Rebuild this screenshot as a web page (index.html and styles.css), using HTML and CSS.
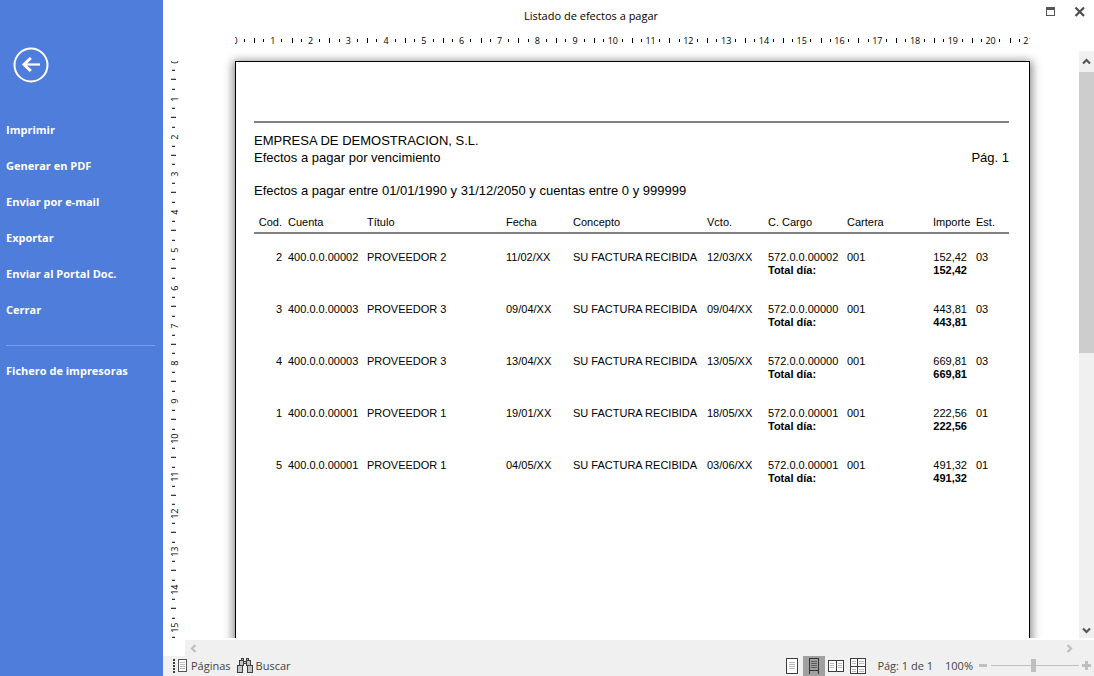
FILE: index.html
```html
<!DOCTYPE html>
<html lang="es">
<head>
<meta charset="utf-8">
<title>Listado de efectos a pagar</title>
<link rel="stylesheet" href="styles.css">
</head>
<body>
<div class="app">
  <aside class="sidebar">
    <button class="back" type="button" aria-label="Volver">
      <svg width="36" height="36" viewBox="0 0 36 36" fill="none" stroke="#fff">
        <circle cx="18" cy="18" r="16.5" stroke-width="2"/>
        <path d="M11 17.5H27" stroke-width="2.2"/>
        <path d="M17.8 11L11 17.5L17.8 24" stroke-width="3"/>
      </svg>
    </button>
    <nav class="menu">
      <button type="button">Imprimir</button>
      <button type="button">Generar en PDF</button>
      <button type="button">Enviar por e-mail</button>
      <button type="button">Exportar</button>
      <button type="button">Enviar al Portal Doc.</button>
      <button type="button">Cerrar</button>
      <hr class="menu-line">
      <button type="button">Fichero de impresoras</button>
    </nav>
  </aside>

  <main class="viewer">
    <header class="titlebar">
      <h1>Listado de efectos a pagar</h1>
      <div class="window-buttons">
        <button type="button" aria-label="Maximizar">
          <svg width="10" height="10" viewBox="0 0 10 10" shape-rendering="crispEdges"><path d="M0 0H9V9H0ZM1 3V8H8V3Z" fill="#555" fill-rule="evenodd"/></svg>
        </button>
        <button type="button" aria-label="Cerrar ventana">
          <svg width="12" height="12" viewBox="0 0 12 12"><path d="M1.5 1.5L10 10M10 1.5L1.5 10" stroke="#4e4e4e" stroke-width="2.2"/></svg>
        </button>
      </div>
    </header>

    <div class="ruler-row">
      <ol class="ruler" id="ruler-x"></ol>
    </div>

    <div class="stage">
      <div class="ruler-column">
        <ol class="ruler vertical" id="ruler-y"></ol>
      </div>
      <div class="canvas">
        <article class="paper">
          <div class="report-head">
            <h2>EMPRESA DE DEMOSTRACION, S.L.</h2>
            <div class="report-sub">
              <span>Efectos a pagar por vencimiento</span>
              <span>Pág. 1</span>
            </div>
            <p>Efectos a pagar entre 01/01/1990 y 31/12/2050 y cuentas entre 0 y 999999</p>
          </div>
          <table class="report">
            <colgroup>
              <col class="c-cod"><col class="c-cuenta"><col class="c-titulo"><col class="c-fecha"><col class="c-concepto"><col class="c-vcto"><col class="c-cargo"><col class="c-cartera"><col class="c-importe"><col class="c-est">
            </colgroup>
            <thead>
              <tr><th class="cod">Cod.</th><th>Cuenta</th><th>Título</th><th>Fecha</th><th>Concepto</th><th>Vcto.</th><th>C. Cargo</th><th>Cartera</th><th>Importe</th><th>Est.</th></tr>
            </thead>
            <tbody>
              <tr><td class="cod">2</td><td>400.0.0.00002</td><td>PROVEEDOR 2</td><td>11/02/XX</td><td>SU FACTURA RECIBIDA</td><td>12/03/XX</td><td>572.0.0.00002</td><td>001</td><td class="importe">152,42</td><td>03</td></tr>
              <tr class="total"><td colspan="6"></td><td colspan="2">Total día:</td><td class="importe">152,42</td><td></td></tr>
            </tbody>
            <tbody>
              <tr><td class="cod">3</td><td>400.0.0.00003</td><td>PROVEEDOR 3</td><td>09/04/XX</td><td>SU FACTURA RECIBIDA</td><td>09/04/XX</td><td>572.0.0.00000</td><td>001</td><td class="importe">443,81</td><td>03</td></tr>
              <tr class="total"><td colspan="6"></td><td colspan="2">Total día:</td><td class="importe">443,81</td><td></td></tr>
            </tbody>
            <tbody>
              <tr><td class="cod">4</td><td>400.0.0.00003</td><td>PROVEEDOR 3</td><td>13/04/XX</td><td>SU FACTURA RECIBIDA</td><td>13/05/XX</td><td>572.0.0.00000</td><td>001</td><td class="importe">669,81</td><td>03</td></tr>
              <tr class="total"><td colspan="6"></td><td colspan="2">Total día:</td><td class="importe">669,81</td><td></td></tr>
            </tbody>
            <tbody>
              <tr><td class="cod">1</td><td>400.0.0.00001</td><td>PROVEEDOR 1</td><td>19/01/XX</td><td>SU FACTURA RECIBIDA</td><td>18/05/XX</td><td>572.0.0.00001</td><td>001</td><td class="importe">222,56</td><td>01</td></tr>
              <tr class="total"><td colspan="6"></td><td colspan="2">Total día:</td><td class="importe">222,56</td><td></td></tr>
            </tbody>
            <tbody>
              <tr><td class="cod">5</td><td>400.0.0.00001</td><td>PROVEEDOR 1</td><td>04/05/XX</td><td>SU FACTURA RECIBIDA</td><td>03/06/XX</td><td>572.0.0.00001</td><td>001</td><td class="importe">491,32</td><td>01</td></tr>
              <tr class="total"><td colspan="6"></td><td colspan="2">Total día:</td><td class="importe">491,32</td><td></td></tr>
            </tbody>
          </table>
        </article>
      </div>
      <div class="vscroll">
        <button type="button" aria-label="Subir"><svg width="9" height="7" viewBox="0 0 9 7"><path d="M1 5.5L4.5 2L8 5.5" fill="none" stroke="#555" stroke-width="2.2"/></svg></button>
        <div class="vthumb"></div>
        <div class="vspace"></div>
        <button type="button" class="down" aria-label="Bajar"><svg width="9" height="7" viewBox="0 0 9 7"><path d="M1 1.5L4.5 5L8 1.5" fill="none" stroke="#555" stroke-width="2.2"/></svg></button>
      </div>
    </div>

    <div class="hscroll">
      <button type="button" aria-label="Izquierda"><svg width="7" height="9" viewBox="0 0 7 9"><path d="M5.5 1L2 4.5L5.5 8" fill="none" stroke="#bfbfbf" stroke-width="2.2"/></svg></button>
      <button type="button" aria-label="Derecha"><svg width="7" height="9" viewBox="0 0 7 9"><path d="M1.500 1L5 4.500L1.500 8" fill="none" stroke="#bfbfbf" stroke-width="2.2"/></svg></button>
    </div>

    <footer class="status">
      <div class="tools">
        <button type="button">
          <svg width="15" height="16" viewBox="0 -2 15 16" shape-rendering="crispEdges"><path d="M0 0h2v2H0zM0 3h2v2H0zM0 6h2v2H0zM0 9h2v2H0zM0 12h2v2H0z" fill="#3c3c3c"/><path d="M5.500 .500h8v12h-8z" fill="#fff" stroke="#555"/><path d="M7 3.500h5M7 5.500h5M7 7.500h5M7 9.500h5" stroke="#bbb"/></svg>
          Páginas
        </button>
        <button type="button">
          <svg width="16" height="16" viewBox="0 -1 16 16" shape-rendering="crispEdges"><g fill="#c4c4c4" stroke="#3c3c3c"><path d="M4.500 .500h2v2h-2zM9.500 .500h2v2h-2z"/><path d="M2.500 2.500h4v5h-4zM9.500 2.500h4v5h-4z"/><path d="M6.500 3.500h3v2h-3z"/><path d="M.500 7.500h5v7h-5zM10.500 7.500h5v7h-5z"/></g></svg>
          Buscar
        </button>
      </div>
      <div class="views">
        <button type="button" aria-label="Página completa"><svg width="12" height="16" viewBox="0 0 12 16" shape-rendering="crispEdges"><path d="M.500 .500h11v15H.500z" fill="#fff" stroke="#3c3c3c"/><path d="M3 4.500h6M3 6.500h6M3 8.500h6M3 10.500h6" stroke="#bbb"/></svg></button>
        <button type="button" class="on" aria-label="Ancho de página"><svg width="12" height="16" viewBox="0 0 12 16" shape-rendering="crispEdges"><path d="M1.500 16V.500h9V16M1 12.500h10" fill="none" stroke="#333"/><path d="M3 3.500h6M3 5.500h6M3 7.500h6M3 9.500h6" stroke="#5c5c5c"/></svg></button>
        <button type="button" aria-label="Dos páginas"><svg width="16" height="16" viewBox="0 0 16 16" shape-rendering="crispEdges"><path d="M.500 2.500h15v11H.500z" fill="#fff" stroke="#3c3c3c"/><path d="M8 2v12" stroke="#3c3c3c"/><path d="M2 5.500h4M2 7.500h4M2 9.500h4M10 5.500h4M10 7.500h4M10 9.500h4" stroke="#bbb"/></svg></button>
        <button type="button" aria-label="Varias páginas"><svg width="16" height="16" viewBox="0 0 16 16" shape-rendering="crispEdges"><path d="M.500 .500h15v15H.500z" fill="#fff" stroke="#3c3c3c"/><path d="M7.500 0v16M0 8.500h16" stroke="#3c3c3c"/><path d="M2 3.500h4M2 5.500h4M9 3.500h5M9 5.500h5M2 11.500h4M2 13.500h4M9 11.500h5M9 13.500h5" stroke="#bbb"/></svg></button>
      </div>
      <span class="page-count">Pág: 1 de 1</span>
      <label class="zoom-label" for="zoom">100%</label>
      <div class="zoom">
        <button type="button" aria-label="Reducir"><svg width="9" height="9" viewBox="0 0 9 9" shape-rendering="crispEdges"><path d="M0 3h8v3H0z" fill="#bfbfbf"/></svg></button>
        <input id="zoom" type="range" min="0" max="205" value="100">
        <button type="button" aria-label="Ampliar"><svg width="9" height="9" viewBox="0 0 9 9" shape-rendering="crispEdges"><path d="M0 3h3V0h3v3h3v3H6v3H3V6H0z" fill="#bfbfbf"/></svg></button>
      </div>
    </footer>
  </main>
</div>
<script src="rulers.js"></script>
</body>
</html>
```
FILE: rulers.js
```js
// One cell per centimetre, its number centred on the mark.
function fillRuler(id, last) {
  const ruler = document.getElementById(id);
  for (let cm = 0; cm <= last; cm += 1) {
    const mark = document.createElement("li");
    mark.textContent = cm;
    ruler.append(mark);
  }
}
fillRuler("ruler-x", 21);
fillRuler("ruler-y", 29);
```
FILE: styles.css
```css
* { box-sizing: border-box; }

body {
  margin: 0;
  font-family: "Open Sans", "Noto Sans", sans-serif;
  font-size: 11px;
  color: #000;
  background: #fff;
}

button {
  margin: 0;
  padding: 0;
  border: 0;
  background: none;
  color: inherit;
  font: inherit;
}

svg { display: block; flex: none; }

.app {
  display: grid;
  grid-template-columns: 163px minmax(0, 1fr);
  height: 100vh;
}

/* Side menu */
.sidebar {
  background: #4e7ddc;
  color: #fff;
  padding: 47px 8px 0 6px;
}

.back { display: block; margin-left: 7px; }

.menu {
  display: flex;
  flex-direction: column;
  margin-top: 28px;
}

.menu button {
  height: 36px;
  text-align: left;
  font-weight: 700;
}

.menu-line {
  width: 100%;
  height: 1px;
  margin: 18px 0 6px;
  border: 0;
  background: #7b9df0;
}

/* Viewer */
.viewer {
  display: flex;
  flex-direction: column;
  min-width: 0;
  min-height: 0;
}

.titlebar {
  display: grid;
  grid-template-columns: 1fr 67px;
  height: 30px;
  padding-right: 8px;
}

.titlebar h1 {
  align-self: center;
  margin: 0;
  text-align: center;
  font-size: 11px;
  font-weight: 400;
}

.window-buttons {
  display: flex;
  justify-content: flex-end;
  align-items: center;
  gap: 18px;
  height: 24px;
}

/* Rulers and document share the same side gutters */
.ruler-row {
  display: flex;
  justify-content: center;
  height: 21px;
  padding: 0 15px 0 23px;
}

.ruler {
  display: flex;
  width: 795px;
  height: 20px;
  margin: 0;
  padding: 0;
  overflow: hidden;
  list-style: none;
  font-size: 9px;
}

.ruler li {
  display: flex;
  flex: 0 0 1cm;
  align-items: center;
  justify-content: center;
  background-image: linear-gradient(#000, #000), linear-gradient(#000, #000), linear-gradient(#000, #000);
  background-repeat: no-repeat;
  background-size: 1px 5px, 1px 3px, 1px 3px;
  background-position: 0 50%, 25% 50%, 75% 50%;
}

.ruler li:first-child { margin-left: -0.5cm; }

.stage {
  display: flex;
  flex: 1;
  min-height: 0;
}

.ruler-column {
  flex: 0 0 23px;
  padding-top: 10px;
  overflow: hidden;
}

.ruler.vertical {
  flex-direction: column;
  width: 22px;
  height: 100%;
}

.ruler.vertical li {
  writing-mode: vertical-rl;
  transform: rotate(180deg);
  background-size: 5px 1px, 3px 1px, 3px 1px;
  background-position: 50% 0, 50% 25%, 50% 75%;
}

.ruler.vertical li:first-child { margin: -0.5cm 0 0; }

.canvas {
  display: flex;
  flex: 1;
  justify-content: center;
  min-width: 0;
  padding-top: 10px;
  overflow: hidden;
}

.paper {
  flex: 0 0 795px;
  height: 29cm;
  padding: 59px 20px 0 18px;
  border: 1px solid #000;
  background: #fff;
  box-shadow: 0 2px 9px 2px #888;
  font-family: "Liberation Sans", Arial, sans-serif;
}

.report-head {
  border-top: 2px solid #808080;
  padding-top: 9px;
  font-size: 13px;
  line-height: 17px;
}

.report-head h2 {
  margin: 0;
  font-size: 13px;
  font-weight: 400;
}

.report-sub { display: flex; justify-content: space-between; }

.report-head p { margin: 16px 0 17px; }

.report {
  width: 100%;
  border-collapse: collapse;
  table-layout: fixed;
  font-size: 11px;
  line-height: 13px;
}

.c-cod { width: 34px; }
.c-cuenta, .c-cargo { width: 79px; }
.c-titulo { width: 139px; }
.c-fecha { width: 67px; }
.c-concepto { width: 134px; }
.c-vcto { width: 61px; }
.c-cartera { width: 86px; }
.c-importe { width: 43px; }

.report th,
.report td {
  height: 13px;
  padding: 0;
  text-align: left;
  white-space: nowrap;
}

.report th {
  padding-bottom: 3px;
  border-bottom: 2px solid #808080;
  font-weight: 400;
}

.report .cod { padding-right: 6px; text-align: right; }
.report .importe { padding-right: 9px; text-align: right; }
.report .total td { padding-bottom: 26px; font-weight: 700; }
.report thead::after { content: ""; display: block; height: 17px; }

/* Scroll bars */
.vscroll {
  display: flex;
  flex: 0 0 15px;
  flex-direction: column;
  background: #f0f0f0;
}

.vscroll button {
  display: grid;
  place-items: center;
  height: 21px;
}

.vscroll .down { height: 15px; }

.vthumb { flex: 51; background: #cdcdcd; }
.vspace { flex: 49; }

.hscroll {
  display: flex;
  justify-content: space-between;
  align-items: center;
  height: 16px;
  margin: 2px 0 0 22px;
  padding: 0 21px 0 5px;
  background: #f0f0f0;
}

/* Status bar */
.status {
  display: flex;
  align-items: center;
  height: 20px;
  padding: 0 3px 2px 10px;
  background: #f0f0f0;
  color: #444;
}

.tools { display: flex; flex: 1; gap: 6px; }

.tools button { display: flex; align-items: center; gap: 3px; }

.views { display: flex; align-self: flex-start; }

.views button {
  display: grid;
  place-items: center;
  width: 22px;
  height: 20px;
}

.views .on { background: #a0a0a0; }

.page-count { margin: 0 12px 0 8px; }

.zoom { display: flex; align-items: center; gap: 3px; margin-left: 6px; }

.zoom input {
  width: 88px;
  height: 13px;
  margin: 0;
  appearance: none;
  background: linear-gradient(#bfbfbf, #bfbfbf) center / 100% 1px no-repeat;
}

.zoom input::-webkit-slider-thumb {
  appearance: none;
  width: 5px;
  height: 13px;
  background: #bfbfbf;
}
```
